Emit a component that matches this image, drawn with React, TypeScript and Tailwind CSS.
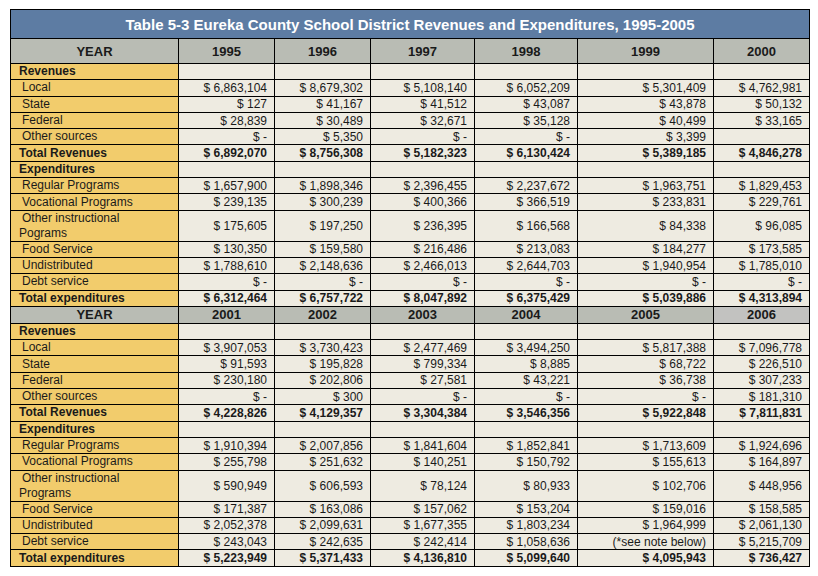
import React from "react";

type Row = { label: string; kind: "section" | "item" | "total" | "wrap"; values: string[] };

const firstYears = ["1995", "1996", "1997", "1998", "1999", "2000"];
const secondYears = ["2001", "2002", "2003", "2004", "2005", "2006"];

const firstRows: Row[] = [
  { label: "Revenues", kind: "section", values: ["", "", "", "", "", ""] },
  { label: "Local", kind: "item", values: ["$ 6,863,104", "$ 8,679,302", "$ 5,108,140", "$ 6,052,209", "$ 5,301,409", "$ 4,762,981"] },
  { label: "State", kind: "item", values: ["$ 127", "$ 41,167", "$ 41,512", "$ 43,087", "$ 43,878", "$ 50,132"] },
  { label: "Federal", kind: "item", values: ["$ 28,839", "$ 30,489", "$ 32,671", "$ 35,128", "$ 40,499", "$ 33,165"] },
  { label: "Other sources", kind: "item", values: ["$ -", "$ 5,350", "$ -", "$ -", "$ 3,399", ""] },
  { label: "Total Revenues", kind: "total", values: ["$ 6,892,070", "$ 8,756,308", "$ 5,182,323", "$ 6,130,424", "$ 5,389,185", "$ 4,846,278"] },
  { label: "Expenditures", kind: "section", values: ["", "", "", "", "", ""] },
  { label: "Regular Programs", kind: "item", values: ["$ 1,657,900", "$ 1,898,346", "$ 2,396,455", "$ 2,237,672", "$ 1,963,751", "$ 1,829,453"] },
  { label: "Vocational Programs", kind: "item", values: ["$ 239,135", "$ 300,239", "$ 400,366", "$ 366,519", "$ 233,831", "$ 229,761"] },
  { label: "Pograms", kind: "wrap", values: ["$ 175,605", "$ 197,250", "$ 236,395", "$ 166,568", "$ 84,338", "$ 96,085"] },
  { label: "Food Service", kind: "item", values: ["$ 130,350", "$ 159,580", "$ 216,486", "$ 213,083", "$ 184,277", "$ 173,585"] },
  { label: "Undistributed", kind: "item", values: ["$ 1,788,610", "$ 2,148,636", "$ 2,466,013", "$ 2,644,703", "$ 1,940,954", "$ 1,785,010"] },
  { label: "Debt service", kind: "item", values: ["$ -", "$ -", "$ -", "$ -", "$ -", "$ -"] },
  { label: "Total expenditures", kind: "total", values: ["$ 6,312,464", "$ 6,757,722", "$ 8,047,892", "$ 6,375,429", "$ 5,039,886", "$ 4,313,894"] },
];

const secondRows: Row[] = [
  { label: "Revenues", kind: "section", values: ["", "", "", "", "", ""] },
  { label: "Local", kind: "item", values: ["$ 3,907,053", "$ 3,730,423", "$ 2,477,469", "$ 3,494,250", "$ 5,817,388", "$ 7,096,778"] },
  { label: "State", kind: "item", values: ["$ 91,593", "$ 195,828", "$ 799,334", "$ 8,885", "$ 68,722", "$ 226,510"] },
  { label: "Federal", kind: "item", values: ["$ 230,180", "$ 202,806", "$ 27,581", "$ 43,221", "$ 36,738", "$ 307,233"] },
  { label: "Other sources", kind: "item", values: ["$ -", "$ 300", "$ -", "$ -", "$ -", "$ 181,310"] },
  { label: "Total Revenues", kind: "total", values: ["$ 4,228,826", "$ 4,129,357", "$ 3,304,384", "$ 3,546,356", "$ 5,922,848", "$ 7,811,831"] },
  { label: "Expenditures", kind: "section", values: ["", "", "", "", "", ""] },
  { label: "Regular Programs", kind: "item", values: ["$ 1,910,394", "$ 2,007,856", "$ 1,841,604", "$ 1,852,841", "$ 1,713,609", "$ 1,924,696"] },
  { label: "Vocational Programs", kind: "item", values: ["$ 255,798", "$ 251,632", "$ 140,251", "$ 150,792", "$ 155,613", "$ 164,897"] },
  { label: "Programs", kind: "wrap", values: ["$ 590,949", "$ 606,593", "$ 78,124", "$ 80,933", "$ 102,706", "$ 448,956"] },
  { label: "Food Service", kind: "item", values: ["$ 171,387", "$ 163,086", "$ 157,062", "$ 153,204", "$ 159,016", "$ 158,585"] },
  { label: "Undistributed", kind: "item", values: ["$ 2,052,378", "$ 2,099,631", "$ 1,677,355", "$ 1,803,234", "$ 1,964,999", "$ 2,061,130"] },
  { label: "Debt service", kind: "item", values: ["$ 243,043", "$ 242,635", "$ 242,414", "$ 1,058,636", "(*see note below)", "$ 5,215,709"] },
  { label: "Total expenditures", kind: "total", values: ["$ 5,223,949", "$ 5,371,433", "$ 4,136,810", "$ 5,099,640", "$ 4,095,943", "$ 736,427"] },
];

function HeaderRow({ years, tall, second }: { years: string[]; tall?: boolean; second?: boolean }) {
  return (
    <tr className={tall ? "h-[25px]" : "h-[17px]"}>
      <th className="border border-black bg-[#b9bcb4] text-center text-[13px] font-bold leading-none">YEAR</th>
      {years.map((y, i) => (
        <th
          key={y}
          className={`border border-black text-center text-[13px] font-bold leading-none ${
            second && i === 5 ? "bg-[#c2c2c0]" : "bg-[#b9bcb4]"
          }`}
        >
          {y}
        </th>
      ))}
    </tr>
  );
}

function BodyRow({ row }: { row: Row }) {
  const bold = row.kind === "section" || row.kind === "total";
  const wrap = row.kind === "wrap";
  return (
    <tr className={wrap ? "h-[31px]" : "h-[16.3px]"}>
      <td
        className={`border border-black bg-[#f2cc6c] py-0 pl-[8px] pr-1 text-[12px] leading-[15px] ${
          bold ? "font-bold" : "indent-[3px]"
        }`}
      >
        {wrap ? (
          <>
            Other instructional
            <br />
            {row.label}
          </>
        ) : (
          row.label
        )}
      </td>
      {row.values.map((v, i) => (
        <td
          key={i}
          className={`border border-black bg-[#eeebe1] py-0 pr-[7px] text-right text-[12px] leading-[14px] ${
            bold ? "font-bold" : ""
          }`}
        >
          {v}
        </td>
      ))}
    </tr>
  );
}

export default function App() {
  return (
    <div className="h-[576px] w-[818px] bg-white pl-[10px] pt-[9px] font-['Liberation_Sans',Arial,sans-serif] text-[#1a1a1a]">
      <table className="w-[799px] table-fixed border-collapse">
        <colgroup>
          <col className="w-[168px]" />
          <col className="w-[96px]" />
          <col className="w-[96px]" />
          <col className="w-[104px]" />
          <col className="w-[103px]" />
          <col className="w-[136px]" />
          <col className="w-[96px]" />
        </colgroup>
        <thead>
          <tr className="h-[29px]">
            <th colSpan={7} className="border border-black bg-[#5d7ca3] text-center text-[15px] font-bold leading-none text-white">
              Table 5-3 Eureka County School District Revenues and Expenditures, 1995-2005
            </th>
          </tr>
        </thead>
        <tbody>
          <HeaderRow years={firstYears} tall />
          {firstRows.map((r, i) => (
            <BodyRow key={`a${i}`} row={r} />
          ))}
          <HeaderRow years={secondYears} second />
          {secondRows.map((r, i) => (
            <BodyRow key={`b${i}`} row={r} />
          ))}
        </tbody>
      </table>
    </div>
  );
}
